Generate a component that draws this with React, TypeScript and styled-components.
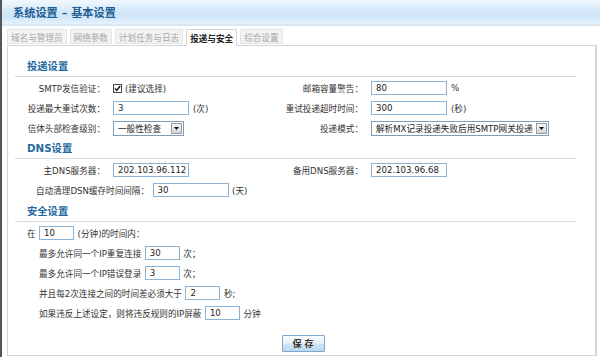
import React from "react";
import styled, { createGlobalStyle } from "styled-components";

const GlobalStyle = createGlobalStyle`
  html, body {
    margin: 0;
    padding: 0;
    background: #fff;
  }
  body {
    font-family: "DejaVu Sans", "Noto Sans CJK SC", sans-serif;
    font-size: 8.6px;
    color: #333;
  }
`;

const Page = styled.div`
  width: 600px;
  height: 357px;
  box-sizing: border-box;
  border-left: 2px solid #555;
  display: flex;
  flex-direction: column;
  overflow: hidden;
`;

const Header = styled.div`
  height: 24px;
  flex: none;
  border-bottom: 2px solid #dce6ee;
  background: linear-gradient(#f1f8fe 0%, #e2f0fc 25%, #d2e7f9 50%, #cfe5f8 70%, #e4f2fd 100%);
  display: flex;
  align-items: center;
  padding-left: 11px;
  font-size: 11.2px;
  font-weight: bold;
  color: #1f5f94;
  white-space: pre;
`;

const TabBar = styled.div`
  margin-top: 3px;
  height: 16px;
  padding-left: 5px;
  display: flex;
  align-items: flex-end;
  gap: 3px;
  flex: none;
`;

const Tab = styled.div<{ $active?: boolean }>`
  box-sizing: border-box;
  height: ${(p) => (p.$active ? 17 : 15)}px;
  margin-bottom: ${(p) => (p.$active ? -1 : 1)}px;
  padding: 0 3px;
  display: flex;
  align-items: center;
  border: 1px solid ${(p) => (p.$active ? "#cfd6dc" : "#e4e4e4")};
  border-bottom: ${(p) => (p.$active ? "none" : "1px solid #e4e4e4")};
  background: ${(p) => (p.$active ? "#fff" : "#f2f2f2")};
  color: ${(p) => (p.$active ? "#222" : "#a8a8a8")};
  font-weight: ${(p) => (p.$active ? "bold" : "normal")};
  position: relative;
  z-index: 1;
  white-space: nowrap;
`;

const Panel = styled.div`
  margin: 0 3px 0 5px;
  border: 1px solid #cbd8e4;
  border-right-width: 2px;
  padding: 10px 0 3px;
  flex: none;
`;

const Section = styled.div<{ $top: number }>`
  margin: ${(p) => p.$top}px 19px 0 7px;
`;

const SectionTitle = styled.div`
  height: 19px;
  line-height: 19px;
  padding-left: 12px;
  border-bottom: 1px solid #d6dbe0;
  font-size: 10.3px;
  font-weight: bold;
  color: #2369a0;
`;

const Body = styled.div`
  padding-top: 1px;
`;

const FieldGrid = styled.div`
  display: grid;
  grid-template-columns: 90px 154px 88px 1fr;
  grid-auto-rows: 20px;
  column-gap: 8px;
  align-items: center;
`;

const Label = styled.div`
  text-align: right;
  white-space: nowrap;
`;

const Control = styled.div`
  display: flex;
  align-items: center;
  gap: 4px;
  white-space: nowrap;
`;

const Line = styled.div<{ $indent: number }>`
  height: 20px;
  padding-left: ${(p) => p.$indent}px;
  display: flex;
  align-items: center;
  gap: 3.5px;
  white-space: nowrap;
`;

const TextInput = styled.input<{ $w: number }>`
  width: ${(p) => p.$w}px;
  height: 14px;
  box-sizing: border-box;
  margin: 0;
  padding: 0 0 0 4px;
  border: 1px solid #8cb4d6;
  background: #fff;
  font: inherit;
  color: #222;
  outline: none;
`;

const CheckBox = styled.span`
  width: 9px;
  height: 9px;
  box-sizing: border-box;
  border: 1px solid #4a4a4a;
  background: #fff;
  display: inline-flex;
  align-items: center;
  justify-content: center;
  margin-right: 0;
`;

const SelectBox = styled.div<{ $w: number }>`
  width: ${(p) => p.$w}px;
  height: 15px;
  box-sizing: border-box;
  border: 1px solid #7f9db9;
  background: #fff;
  display: flex;
  align-items: center;
  padding: 1px;
`;

const SelectValue = styled.span`
  flex: 1;
  padding-left: 3px;
  color: #222;
  overflow: hidden;
  white-space: nowrap;
`;

const SelectArrow = styled.span`
  width: 11px;
  height: 11px;
  box-sizing: border-box;
  border: 1px solid #9a9a9a;
  background: linear-gradient(#f6f6f6, #d4d4d4);
  display: flex;
  align-items: center;
  justify-content: center;
`;

const ButtonRow = styled.div`
  margin-top: 12px;
  padding-left: 3px;
  display: flex;
  justify-content: center;
`;

const SaveButton = styled.button`
  width: 43px;
  height: 17px;
  box-sizing: border-box;
  margin: 0;
  padding: 0;
  border: 1px solid #7ba7d0;
  border-radius: 1px;
  background: linear-gradient(#fbfdff 0%, #e8f2fb 45%, #d2e4f4 55%, #bdd6ee 100%);
  font-family: inherit;
  font-size: 9px;
  font-weight: bold;
  color: #333;
  white-space: pre;
`;

function Select({ w, value }: { w: number; value: string }) {
  return (
    <SelectBox $w={w}>
      <SelectValue>{value}</SelectValue>
      <SelectArrow>
        <svg width="5" height="3" viewBox="0 0 5 3">
          <polygon points="0,0 5,0 2.5,3" fill="#111" />
        </svg>
      </SelectArrow>
    </SelectBox>
  );
}

const tabs = ["域名与管理员", "网络参数", "计划任务与日志", "投递与安全", "综合设置"];

export default function App() {
  return (
    <>
      <GlobalStyle />
      <Page>
        <Header>系统设置 – 基本设置</Header>
        <TabBar>
          {tabs.map((t) => (
            <Tab key={t} $active={t === "投递与安全"}>
              {t}
            </Tab>
          ))}
        </TabBar>
        <Panel>
          <Section $top={1}>
            <SectionTitle>投递设置</SectionTitle>
            <Body>
              <FieldGrid>
                <Label>SMTP发信验证：</Label>
                <Control style={{ gap: 3 }}>
                  <CheckBox>
                    <svg width="7" height="7" viewBox="0 0 7 7">
                      <path d="M1 3.4 L2.8 5.4 L6.2 1" fill="none" stroke="#111" strokeWidth="1.4" />
                    </svg>
                  </CheckBox>
                  (建议选择)
                </Control>
                <Label>邮箱容量警告：</Label>
                <Control>
                  <TextInput $w={76} defaultValue="80" />%
                </Control>

                <Label>投递最大重试次数：</Label>
                <Control>
                  <TextInput $w={76} defaultValue="3" />(次)
                </Control>
                <Label>重试投递超时时间：</Label>
                <Control>
                  <TextInput $w={76} defaultValue="300" />(秒)
                </Control>

                <Label>信体头部检查级别：</Label>
                <Control>
                  <Select w={71} value="一般性检查" />
                </Control>
                <Label>投递模式：</Label>
                <Control>
                  <Select w={178} value="解析MX记录投递失败后用SMTP网关投递" />
                </Control>
              </FieldGrid>
            </Body>
          </Section>

          <Section $top={1}>
            <SectionTitle>DNS设置</SectionTitle>
            <Body>
              <FieldGrid>
                <Label>主DNS服务器：</Label>
                <Control>
                  <TextInput $w={76} defaultValue="202.103.96.112" />
                </Control>
                <Label>备用DNS服务器：</Label>
                <Control>
                  <TextInput $w={76} defaultValue="202.103.96.68" />
                </Control>
              </FieldGrid>
              <Line $indent={21}>
                自动清理DSN缓存时间间隔：
                <TextInput $w={76} defaultValue="30" />
                (天)
              </Line>
            </Body>
          </Section>

          <Section $top={2}>
            <SectionTitle>安全设置</SectionTitle>
            <Body>
              <Line $indent={12}>
                在<TextInput $w={35} defaultValue="10" />(分钟)的时间内：
              </Line>
              <Line $indent={24}>
                最多允许同一个IP重复连接<TextInput $w={35} defaultValue="30" />次；
              </Line>
              <Line $indent={24}>
                最多允许同一个IP错误登录<TextInput $w={35} defaultValue="3" />次；
              </Line>
              <Line $indent={24}>
                并且每2次连接之间的时间差必须大于<TextInput $w={35} defaultValue="2" />秒;
              </Line>
              <Line $indent={24}>
                如果违反上述设定，则将违反规则的IP屏蔽<TextInput $w={35} defaultValue="10" />分钟
              </Line>
            </Body>
          </Section>

          <ButtonRow>
            <SaveButton>保 存</SaveButton>
          </ButtonRow>
        </Panel>
      </Page>
    </>
  );
}
